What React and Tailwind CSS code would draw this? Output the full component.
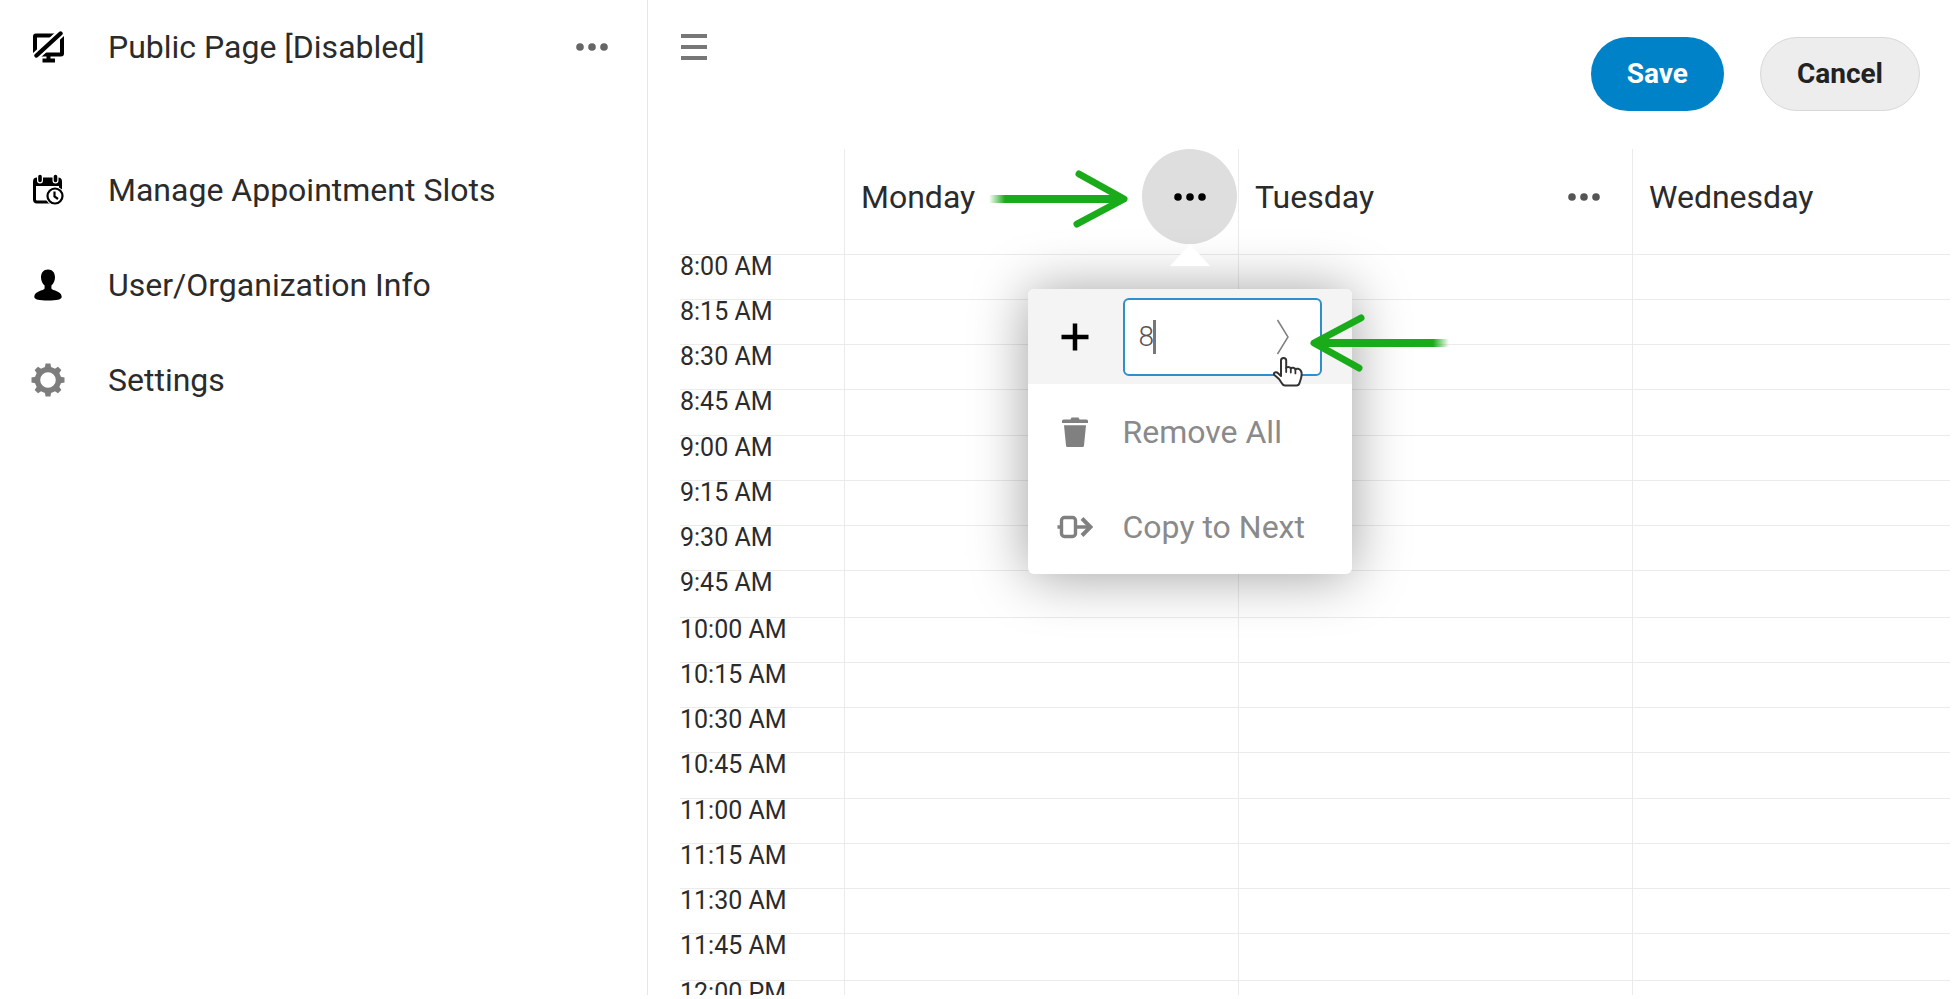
import { useState } from 'react'

const DAYS = ['Monday', 'Tuesday', 'Wednesday']

const TIMES = [
  '8:00 AM', '8:15 AM', '8:30 AM', '8:45 AM',
  '9:00 AM', '9:15 AM', '9:30 AM', '9:45 AM',
  '10:00 AM', '10:15 AM', '10:30 AM', '10:45 AM',
  '11:00 AM', '11:15 AM', '11:30 AM', '11:45 AM',
  '12:00 PM',
]

const NAV_ITEMS = [
  { label: 'Manage Appointment Slots', Icon: CalendarIcon },
  { label: 'User/Organization Info', Icon: UserIcon },
  { label: 'Settings', Icon: GearIcon },
]

/* ---- ICONS ---- */

function ScreenOffIcon() {
  return (
    <svg width="32" height="32" viewBox="0 0 32 32" fill="none" aria-hidden="true">
      <rect x="3" y="4.5" width="27" height="19" rx="1" stroke="#000" strokeWidth="4" />
      <path d="M16.5 24v5M10.5 29.5h12.5" stroke="#000" strokeWidth="4" />
      <path d="M2 27L31 0" stroke="#fff" strokeWidth="8.5" />
      <path d="M4.5 24.5L28.5 2.5" stroke="#000" strokeWidth="4.4" strokeLinecap="round" />
    </svg>
  )
}

function CalendarIcon() {
  return (
    <svg width="32" height="32" viewBox="0 0 32 32" fill="none" aria-hidden="true">
      <rect x="2.5" y="5" width="26" height="23" rx="2.5" stroke="#000" strokeWidth="3" />
      <path d="M2 5h27v7H2z" fill="#000" />
      <path d="M8 3v3.5M23.5 3v3.5" stroke="#fff" strokeWidth="6" strokeLinecap="round" />
      <path d="M8 2.5v4M23.5 2.5v4" stroke="#000" strokeWidth="3.6" strokeLinecap="round" />
      <circle cx="23" cy="22" r="9.5" fill="#fff" />
      <circle cx="23" cy="22" r="7.5" stroke="#000" strokeWidth="2.2" />
      <path d="M22.5 17.5v5l3.5 2.5" stroke="#000" strokeWidth="2.2" />
    </svg>
  )
}

function UserIcon() {
  return (
    <svg width="32" height="32" viewBox="0 0 32 32" fill="#000" aria-hidden="true">
      <path d="M16 .5c4.500 0 7 3.200 7 7.800 0 3.500-1.500 6.500-3.600 8.200v2.500c0 1 .8 1.500 2 1.900 5 1.500 8.300 3.200 8.300 7.100 0 2.500-5 3.500-13.700 3.500S2.300 30.500 2.300 28c0-3.900 3.300-5.600 8.300-7.100 1.200-.4 2-.9 2-1.900v-2.500C10.500 14.800 9 11.800 9 8.300 9 3.700 11.500.5 16 .5z" />
    </svg>
  )
}

function GearIcon() {
  return (
    <svg width="34" height="34" viewBox="0 0 34 34" fill="none" aria-hidden="true">
      <circle cx="17" cy="17" r="10.5" stroke="#7d7d7d" strokeWidth="5.4" />
      {[0, 45, 90, 135, 180, 225, 270, 315].map((angle) => (
        <path key={angle} d="M14.600 .5h4.800l1 5h-6.800z" fill="#7d7d7d" transform={`rotate(${angle} 17 17)`} />
      ))}
    </svg>
  )
}

function DotsIcon({ className }) {
  return (
    <svg width="32" height="8" viewBox="0 0 32 8" className={className} fill="currentColor" aria-hidden="true">
      <circle cx="4" cy="4" r="3.8" />
      <circle cx="16" cy="4" r="3.8" />
      <circle cx="28" cy="4" r="3.8" />
    </svg>
  )
}

function PlusIcon() {
  return (
    <svg width="28" height="28" viewBox="0 0 28 28" aria-hidden="true">
      <path d="M14 .5v27M.5 14h27" stroke="#000" strokeWidth="4.5" />
    </svg>
  )
}

function TrashIcon() {
  return (
    <svg width="28" height="32" viewBox="0 0 28 32" fill="#808080" aria-hidden="true">
      <path d="M1 5a1.500 1.500 0 0 1 1.500-1.500H9.500l1-2h7l1 2h7A1.500 1.500 0 0 1 27 5V7H1z" />
      <path d="M3 9.200h22l-2 20.300a1.500 1.500 0 0 1-1.500 1.500h-15A1.500 1.500 0 0 1 5 29.500z" />
    </svg>
  )
}

function CopyNextIcon() {
  return (
    <svg width="36" height="24" viewBox="0 0 36 24" fill="none" stroke="#808080" strokeWidth="3.4" aria-hidden="true">
      <rect x="4.5" y="2.500" width="14" height="19" rx="3" />
      <path d="M.5 12h4M18.500 12h14" />
      <path d="M25 3.500l8.500 8.500-8.500 8.500" strokeWidth="4" />
    </svg>
  )
}

function HandCursor() {
  return (
    <svg width="32" height="32" viewBox="0 0 32 32" aria-hidden="true">
      <path
        d="M9 20V4.500a2.600 2.600 0 0 1 5.200 0V12c.5-1.500 4-1.500 4.600.6.8-1.400 4-1.200 4.600.8 1-1.200 4.200-1 5.600 1.600.8 1.500.5 6-.5 9l-1 3c-.5 1.700-1.500 2.500-3 2.500H13c-1.500 0-2.300-.7-3-2l-3-4.500-4.600-4c-1.500-1.700.6-3.500 2.800-2.500z"
        fill="#fff"
        stroke="#333"
        strokeWidth="2"
        strokeLinejoin="round"
      />
      <path d="M14.200 12v4M18.800 12.600v4M23.400 13.400v4" stroke="#333" strokeWidth="1.8" strokeLinecap="round" />
    </svg>
  )
}

function GreenArrow({ id, className }) {
  return (
    <svg width="144" height="64" viewBox="0 0 144 64" fill="none" className={className} aria-hidden="true">
      <defs>
        <linearGradient id={id} gradientUnits="userSpaceOnUse" x1="0" y1="0" x2="16" y2="0">
          <stop offset="0" stopColor="#1aab1a" stopOpacity="0" />
          <stop offset="1" stopColor="#1aab1a" />
        </linearGradient>
      </defs>
      <path d="M0 28h134v8H0z" fill={`url(#${id})`} />
      <path d="M90 7L135 32 88 57" stroke="#1aab1a" strokeWidth="7" strokeLinecap="round" strokeLinejoin="round" />
    </svg>
  )
}

/* ---- SIDEBAR ---- */

function Sidebar() {
  return (
    <aside className="w-[648px] shrink-0 border-r border-gray-200">
      <div className="flex h-[94px] items-center pr-2">
        <span className="flex w-24 justify-center"><ScreenOffIcon /></span>
        <span className="flex-1 pl-3">Public Page [Disabled]</span>
        <button type="button" aria-label="Page options" className="flex size-[95px] items-center justify-center text-[#666]">
          <DotsIcon />
        </button>
      </div>
      <nav className="mt-12">
        {NAV_ITEMS.map(({ label, Icon }) => (
          <a key={label} href="#" className="flex h-[95px] items-center">
            <span className="flex w-24 justify-center"><Icon /></span>
            <span className="pl-3">{label}</span>
          </a>
        ))}
      </nav>
    </aside>
  )
}

/* ---- DAY MENU ---- */

function DayMenu() {
  const [hour, setHour] = useState('8')

  return (
    <div className="absolute left-1/2 top-full z-10 w-[324px] -translate-x-1/2 pt-[45px] text-left text-[#8a8a8a]">
      <svg width="40" height="22" viewBox="0 0 40 22" className="absolute left-[142px] top-0 z-10" aria-hidden="true">
        <path d="M20 0l20 22H0z" fill="#fff" />
      </svg>
      <div className="rounded-md bg-white shadow-[0_2px_56px_rgba(0,0,0,0.38)]">
        <div className="flex h-[95px] items-center rounded-t-md bg-[#f4f4f4]">
          <label htmlFor="add-hour" aria-label="Add slot at" className="flex w-[95px] justify-center"><PlusIcon /></label>
          <div className="relative">
            <input
              id="add-hour"
              type="text"
              value={hour}
              onChange={(e) => setHour(e.target.value)}
              className="h-[78px] w-[199px] rounded-md border-2 border-[#2f8ecb] bg-white px-3.5 text-[28px] font-light text-[#555] outline-none"
            />
            <span className="absolute left-[30px] top-[22px] h-[34px] w-[3px] bg-[#777]" />
            <button type="button" aria-label="Add" className="absolute right-8 top-[21px]">
              <svg width="14" height="36" viewBox="0 0 14 36" fill="none" aria-hidden="true">
                <path d="M1.500 1l10.500 17L1.500 35" stroke="#808080" strokeWidth="1.500" />
              </svg>
            </button>
            <span className="absolute left-[149px] top-[58px]"><HandCursor /></span>
            <GreenArrow id="arrow-tail-menu" className="absolute left-[182px] top-[13px] rotate-180" />
          </div>
        </div>
        <button type="button" className="flex h-[95px] w-full items-center">
          <span className="flex w-[95px] justify-center"><TrashIcon /></span>
          Remove All
        </button>
        <button type="button" className="flex h-[95px] w-full items-center">
          <span className="flex w-[95px] justify-center"><CopyNextIcon /></span>
          Copy to Next
        </button>
      </div>
    </div>
  )
}

/* ---- SCHEDULE ---- */

function DayHeader({ day, open, onToggle }) {
  return (
    <th scope="col" className="border-b border-l border-[#ebebeb] p-0 align-top font-normal">
      <div className="relative flex h-[95px] items-center justify-between pl-4 pr-px">
        {day}
        {open && <GreenArrow id="arrow-tail-day" className="absolute left-[144px] top-[18px]" />}
        <div className="relative">
          <button
            type="button"
            aria-label={`${day} options`}
            onClick={onToggle}
            className={`flex size-[95px] items-center justify-center rounded-full ${open ? 'bg-[#dedede] text-black' : 'text-[#555]'}`}
          >
            <DotsIcon />
          </button>
          {open && <DayMenu />}
        </div>
      </div>
    </th>
  )
}

// 15 minute rows, the last row of each hour is slightly taller
function rowHeight(i) {
  if (i % 8 === 7) return 'h-[47px]'
  if (i % 4 === 3) return 'h-[46px]'
  return 'h-[45px]'
}

function Schedule() {
  const [openDay, setOpenDay] = useState('Monday')

  return (
    <table className="ml-8 w-[1346px] table-fixed border-separate border-spacing-0">
      <colgroup>
        <col className="w-[164px]" />
        {DAYS.map((day) => <col key={day} />)}
      </colgroup>
      <thead>
        <tr className="h-[106px]">
          <td className="border-b border-[#ebebeb]" />
          {DAYS.map((day) => (
            <DayHeader
              key={day}
              day={day}
              open={openDay === day}
              onToggle={() => setOpenDay(openDay === day ? '' : day)}
            />
          ))}
        </tr>
      </thead>
      <tbody>
        {TIMES.map((time, i) => (
          <tr key={time} className={rowHeight(i)}>
            <th scope="row" className="border-b border-[#ebebeb] p-0 text-left align-top text-[25px] font-normal leading-6">{time}</th>
            {DAYS.map((day) => <td key={day} className="border-b border-l border-[#ebebeb] p-0" />)}
          </tr>
        ))}
      </tbody>
    </table>
  )
}

export default function App() {
  return (
    <div className="flex h-screen overflow-hidden bg-white pb-1 pr-2 font-['Roboto',sans-serif] text-[32px] leading-10 text-[#2b2b2b]">
      <Sidebar />
      <main className="min-w-0 flex-1 overflow-hidden">
        <header className="flex h-[149px] items-start justify-between pl-8 pr-[30px]">
          <button type="button" aria-label="Toggle menu" className="flex h-[94px] items-center">
            <svg width="28" height="28" viewBox="0 0 28 28" aria-hidden="true">
              <path d="M1 3h26M1 14h26M1 25h26" stroke="#777" strokeWidth="4" />
            </svg>
          </button>
          <div className="flex gap-9 pt-[37px] text-[28px] font-bold">
            <button type="button" className="h-[74px] rounded-full bg-[#0082c9] px-9 text-white">Save</button>
            <button type="button" className="h-[74px] rounded-full border border-[#d8d8d8] bg-[#ededed] px-9 text-[#222]">Cancel</button>
          </div>
        </header>
        <Schedule />
      </main>
    </div>
  )
}
